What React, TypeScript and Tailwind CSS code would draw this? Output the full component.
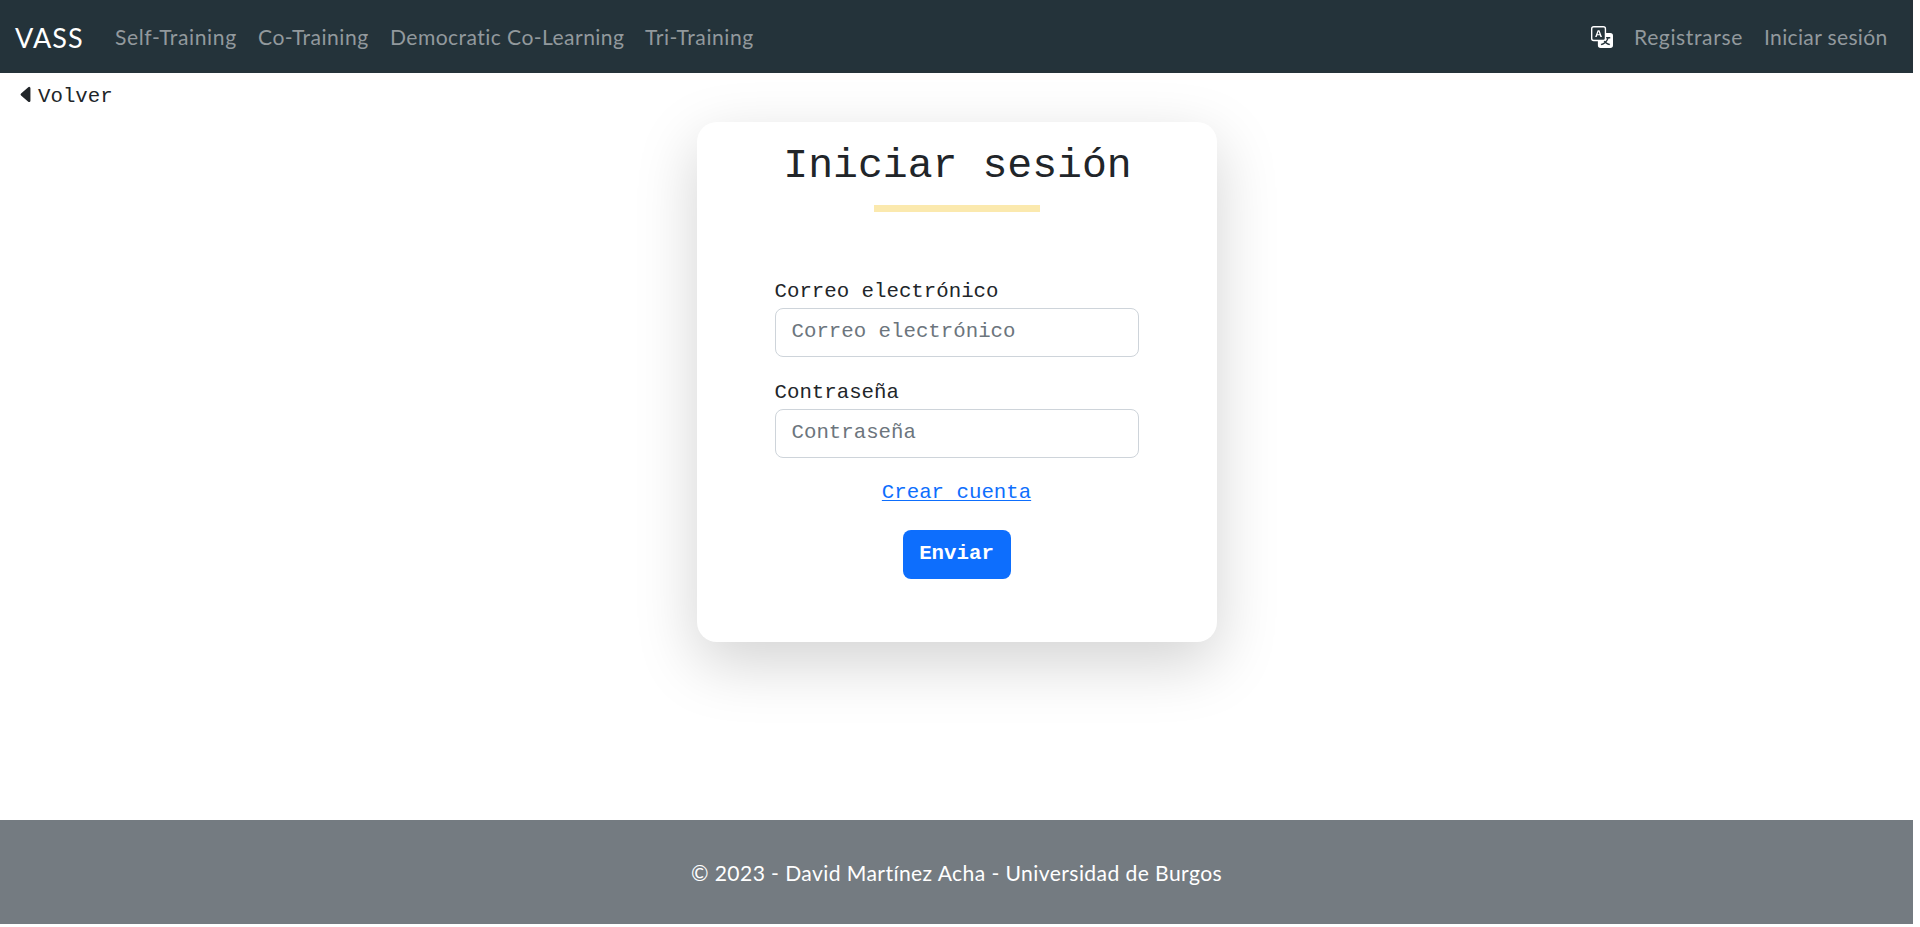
import { BsCaretLeftFill, BsTranslate } from "react-icons/bs";

const NAV = [
  { label: "Self-Training", cls: "w-[143px] tracking-[0.6px]" },
  { label: "Co-Training", cls: "w-[132px] tracking-[0.5px]" },
  { label: "Democratic Co-Learning", cls: "w-[255px] tracking-[0.43px]" },
  { label: "Tri-Training", cls: "w-[110px] tracking-[0.55px]" },
];

function Field({ label, type }: { label: string; type: string }) {
  return (
    <label className="block h-[101px]">
      <span className="block h-[31px] leading-[29px] whitespace-nowrap">{label}</span>
      <input
        type={type}
        placeholder={label}
        className="block h-[49px] w-full rounded-[8px] border border-[#ced4da] bg-white px-[16px] pb-[2px] text-[#212529] outline-none placeholder:text-[#6c757d]"
      />
    </label>
  );
}

export default function App() {
  return (
    <div className="flex h-[927px] w-full flex-col overflow-hidden bg-white pr-[7px] font-['Lato',sans-serif] text-[20.74px] text-[#212529]">
      <nav className="flex h-[73px] shrink-0 items-center whitespace-nowrap bg-[#24333a] pl-[15px] pr-[26px] text-[21.1px] leading-[31px] text-[#92999d]">
        <a className="w-[100px] pt-px text-[27px] leading-[39px] tracking-[1.1px] text-white">VASS</a>
        {NAV.map((n) => (
          <a key={n.label} className={n.cls}>{n.label}</a>
        ))}
        <div className="ml-auto flex items-center">
          <BsTranslate className="mr-[21px] size-[22px] text-white" />
          <a className="w-[130px] tracking-[0.6px]">Registrarse</a>
          <a className="w-[123px] tracking-[0.33px]">Iniciar sesión</a>
        </div>
      </nav>
      <main className="flex h-[747px] shrink-0 flex-col font-['Liberation_Mono',monospace]">
        <a className="flex h-[49px] items-center pl-[16px] pb-[7px]">
          <BsCaretLeftFill className="size-[21px]" />
          <span className="pt-[5px] pl-px">Volver</span>
        </a>
        <section className="mx-auto flex h-[520px] w-[520px] flex-col items-center rounded-[20px] bg-white shadow-[0_20.7px_62px_rgba(0,0,0,0.175)]">
          <h1 className="mt-[19px] h-[50px] pl-[2px] text-[41.48px] leading-[50px] whitespace-nowrap">Iniciar sesión</h1>
          <div className="mt-[14px] h-[7px] w-[166px] bg-[#fbe9ae]" />
          <form className="mt-[65px] flex w-[364px] flex-col">
            <Field label="Correo electrónico" type="email" />
            <Field label="Contraseña" type="password" />
            <a className="mx-auto h-[31px] leading-[27px] text-[#0d6efd] underline decoration-1 underline-offset-[2px]">Crear cuenta</a>
            <button type="button" className="mx-auto mt-[20px] h-[49px] w-[108px] rounded-[8px] bg-[#0d6efd] pb-[2px] font-bold text-white">
              Enviar
            </button>
          </form>
        </section>
      </main>
      <footer className="flex h-[104px] shrink-0 items-center justify-center bg-[#747b81] pt-px text-[21.1px] leading-[31px] tracking-[0.41px] text-white">
        © 2023 - David Martínez Acha - Universidad de Burgos
      </footer>
    </div>
  );
}
